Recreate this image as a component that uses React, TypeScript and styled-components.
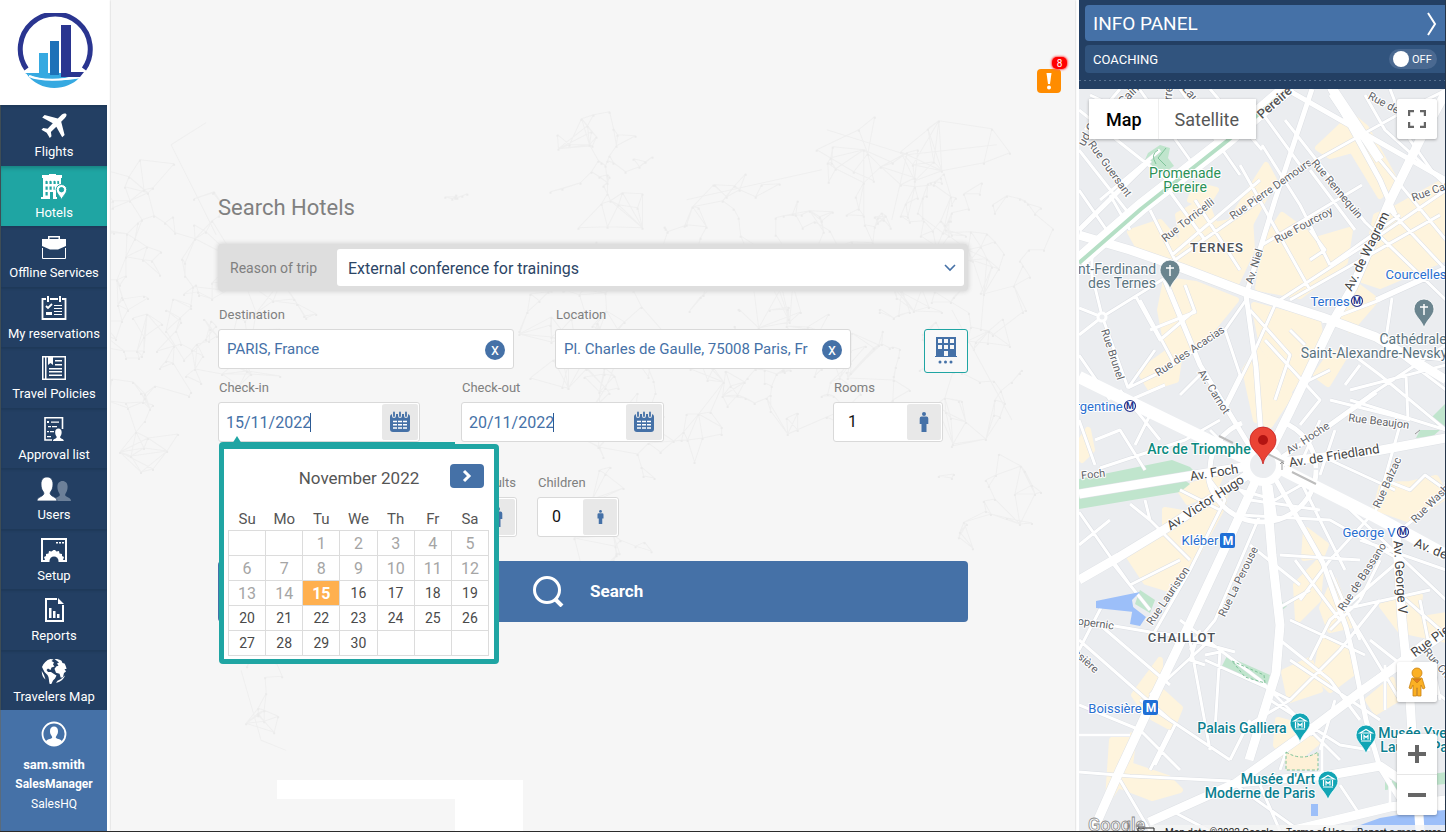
import React from "react";
import styled, { createGlobalStyle, css } from "styled-components";

const c = {
  navy: "#233f63",
  blue: "#4571a7",
  teal: "#1fa5a3",
  page: "#f6f6f6",
  label: "#808080",
  line: "#d9d9d9",
  orange: "#ff8c00",
};

const GlobalStyle = createGlobalStyle`
  *, *::before, *::after { box-sizing: border-box; }
  body { margin: 0; background: #fff; font-family: Roboto, "Liberation Sans", sans-serif; }
  button, input, select { font-family: inherit; margin: 0; }
`;

const Page = styled.div`
  display: grid;
  grid-template-columns: 107px minmax(0, 1fr) 367px;
  column-gap: 4px;
  min-height: 100vh;
  border-bottom: 1px solid #2b2b2b;
  overflow: hidden;
`;

/* ---------- sidebar ---------- */

const Sidebar = styled.aside`
  display: flex;
  flex-direction: column;
  color: #fff;
`;

const LogoBox = styled.div`
  display: flex;
  justify-content: center;
  height: 105px;
  padding: 13px 0 0 3px;
`;

const Nav = styled.nav`
  flex: 1;
  display: flex;
  flex-direction: column;
  border-left: 1px solid #3f4d55;
`;

const NavLink = styled.a<{ $active?: boolean }>`
  flex: 1;
  display: flex;
  flex-direction: column;
  align-items: center;
  padding-top: 8px;
  gap: 4px;
  min-height: 58px;
  font-size: 13px;
  line-height: 18px;
  white-space: nowrap;
  color: #fff;
  text-decoration: none;
  background: ${c.navy};
  box-shadow: inset 0 2px 2px #1f3959;
  ${(p) =>
    p.$active &&
    css`
      background: ${c.teal};
      box-shadow: inset 0 4px 4px -2px #18807f;
    `}
`;

const Profile = styled.a`
  display: flex;
  flex-direction: column;
  align-items: center;
  height: 121px;
  padding-top: 11px;
  border-left: 1px solid #5a6b7c;
  background: ${c.blue};
  color: #fff;
  text-decoration: none;
  font-size: 12px;
  line-height: 20px;
`;

const ProfileName = styled.strong`
  margin-top: 8px;
  font-size: 13px;
  line-height: 19px;
`;

/* ---------- main area ---------- */

const Main = styled.main`
  position: relative;
  display: flex;
  flex-direction: column;
  align-items: center;
  padding: 193px 24px 0;
  background: ${c.page};
  box-shadow: 0 0 2px #b8b8b8;
  clip-path: inset(0 -2px 0 -2px);
`;

const Backdrop = styled.svg`
  position: absolute;
  top: 0;
  left: 0;
  width: 100%;
  height: 100%;
`;

const AlertButton = styled.button`
  position: absolute;
  top: 69px;
  right: 14px;
  width: 24px;
  height: 24px;
  padding: 0;
  border: 0;
  border-radius: 4px;
  background: ${c.orange};
`;

const AlertCount = styled.span`
  position: absolute;
  top: -12px;
  right: -6px;
  width: 15px;
  height: 12px;
  border-radius: 5px;
  background: #f00;
  box-shadow: 0 0 2px 1px #f66;
  color: #fff;
  font-size: 10px;
  line-height: 13px;
  text-align: center;
`;

const Form = styled.form`
  position: relative;
  width: 100%;
  max-width: 750px;
`;

const Title = styled.h1`
  margin: 0 0 21px;
  font-size: 22px;
  line-height: 30px;
  font-weight: 400;
  color: ${c.label};
`;

const ReasonBar = styled.div`
  display: flex;
  align-items: center;
  height: 47px;
  padding: 5px 4px 5px 12px;
  border-radius: 4px;
  background: #dedede;
  box-shadow: 0 0 4px 1px #d6d6d6;
`;

const ReasonLabel = styled.label`
  width: 107px;
  font-size: 14px;
  color: ${c.label};
`;

const SelectBox = styled.div`
  position: relative;
  flex: 1;
  display: flex;
  & > svg {
    position: absolute;
    right: 8px;
    top: 13px;
    pointer-events: none;
  }
`;

const Select = styled.select`
  flex: 1;
  height: 37px;
  padding: 1px 11px 0;
  border: 0;
  border-radius: 3px;
  appearance: none;
  background: #fff;
  color: #2c4566;
  font-size: 16px;
`;

const Row = styled.div<{ $top: number }>`
  display: flex;
  align-items: flex-end;
  margin-top: ${(p) => p.$top}px;
`;

const Field = styled.div<{ $w: number; $ml?: string; $end?: boolean; $mr?: number }>`
  position: relative;
  display: flex;
  flex-direction: column;
  align-items: ${(p) => (p.$end ? "flex-end" : "stretch")};
  width: ${(p) => p.$w}px;
  margin-left: ${(p) => p.$ml ?? "0"};
  margin-right: ${(p) => p.$mr ?? 0}px;
`;

const Label = styled.label`
  padding: 0 1px;
  font-size: 13px;
  line-height: 18px;
  margin-bottom: 5px;
  color: ${c.label};
`;

const InputBox = styled.div`
  display: flex;
  align-items: center;
  width: 100%;
  height: 40px;
  border: 1px solid ${c.line};
  border-radius: 3px;
  background: #fff;
`;

const TextInput = styled.input`
  flex: 1;
  min-width: 0;
  height: 36px;
  margin: 0 9px 0 8px;
  padding: 0;
  border: 0;
  background: none;
  color: ${c.blue};
  font-size: 15px;
`;

const DateInput = styled.input`
  width: 84px;
  height: 36px;
  margin-left: 7px;
  padding: 0;
  border: 0;
  background: none;
  color: ${c.blue};
  font-size: 16px;
`;

const Caret = styled.span`
  width: 1px;
  height: 19px;
  background: #2c5a94;
`;

const NumberInput = styled.input`
  flex: 1;
  min-width: 0;
  height: 36px;
  padding: 0 0 2px 14px;
  border: 0;
  background: none;
  color: #111;
  font-size: 16px;
`;

const ClearButton = styled.button`
  width: 20px;
  height: 20px;
  margin: 1px 8px 0 0;
  padding: 0;
  border: 0;
  border-radius: 50%;
  background: ${c.blue};
  color: #fff;
  font-size: 16px;
  line-height: 18px;
`;

const AddOn = styled.button`
  display: flex;
  align-items: center;
  justify-content: center;
  align-self: stretch;
  width: 37px;
  margin-left: auto;
  padding: 0;
  border: 1px solid #fff;
  border-left: 0;
  border-radius: 3px;
  background: #e8e8e8;
`;

const AddOnMark = styled(AddOn).attrs({ as: "span" })`
  width: 35px;
`;

const HotelButton = styled.button`
  display: flex;
  align-items: center;
  justify-content: center;
  width: 44px;
  height: 44px;
  margin: 0 0 -4px auto;
  padding: 0;
  border: 1px solid ${c.teal};
  border-radius: 3px;
  background: #f8f8f8;
`;

const SearchButton = styled.button`
  display: flex;
  align-items: center;
  gap: 26px;
  width: 100%;
  height: 61px;
  margin-top: 24px;
  padding: 0 0 2px 314px;
  border: 0;
  border-radius: 4px;
  background: ${c.blue};
  color: #fff;
  font-size: 17px;
  line-height: 32px;
  font-weight: 700;
`;

const Banner = styled.div`
  position: relative;
  display: flex;
  flex-direction: column;
  align-items: flex-end;
  align-self: flex-start;
  width: 246px;
  margin: auto 0 0 calc((100% - min(100%, 750px)) / 2 + 59px);
`;

const BannerTop = styled.div`
  width: 100%;
  height: 19px;
  background: #fff;
`;

const BannerSide = styled.div`
  width: 68px;
  height: 32px;
  background: #fff;
`;

/* ---------- calendar ---------- */

const Popup = styled.div`
  position: absolute;
  z-index: 2;
  top: calc(100% + 2px);
  left: 1px;
  width: 280px;
  padding: 14px 4px 3px;
  border: 5px solid ${c.teal};
  border-radius: 4px;
  background: #fff;
  &::before {
    content: "";
    position: absolute;
    top: -13px;
    left: 8px;
    border: 5px solid transparent;
    border-top: 0;
    border-bottom: 8px solid ${c.teal};
  }
  &::after {
    content: "";
    position: absolute;
    top: -7px;
    left: -5px;
    width: 236px;
    height: 7px;
    border-radius: 4px 0 0 0;
    background: ${c.teal};
  }
`;

const PopupHead = styled.div`
  display: grid;
  grid-template-columns: 34px 1fr 34px;
  align-items: center;
  padding: 0 6px;
  margin-bottom: 18px;
`;

const Month = styled.h2`
  margin: 3px 0 0;
  font-size: 17px;
  line-height: 24px;
  font-weight: 400;
  text-align: center;
  color: #555;
`;

const NextButton = styled.button`
  display: flex;
  align-items: center;
  justify-content: center;
  width: 34px;
  height: 24px;
  margin-bottom: 2px;
  padding: 0;
  border: 0;
  border-radius: 4px;
  background: ${c.blue};
`;

const Days = styled.table`
  width: 261px;
  table-layout: fixed;
  border-collapse: collapse;
  color: #555;
  th {
    height: 22px;
    padding: 0;
    font-size: 15px;
    font-weight: 400;
  }
`;

const DayCell = styled.td`
  height: 25px;
  padding: 0;
  border: 1px solid #dcdcdc;
`;

const Day = styled.button<{ $past?: boolean; $on?: boolean }>`
  display: block;
  width: 100%;
  height: 24px;
  padding: 1px 0 0;
  border: 0;
  background: ${(p) => (p.$on ? "#ffb04f" : "none")};
  color: ${(p) => (p.$on ? "#fff" : p.$past ? "#a5a5a5" : "#4a4a4a")};
  font-size: ${(p) => (p.$past || p.$on ? 16 : 14)}px;
  font-weight: ${(p) => (p.$on ? 700 : 400)};
`;

/* ---------- info panel ---------- */

const Panel = styled.aside`
  display: flex;
  flex-direction: column;
  border-right: 1px solid #26364a;
`;

const PanelTop = styled.div`
  height: 89px;
  padding: 5px 0 0 6px;
  background: ${c.navy};
`;

const PanelTitle = styled.button`
  display: flex;
  align-items: center;
  justify-content: space-between;
  width: 100%;
  height: 36px;
  padding: 1px 8px 0;
  border: 0;
  border-radius: 4px 0 0 4px;
  background: ${c.blue};
  color: #fff;
  font-size: 19px;
`;

const Coaching = styled.label`
  display: flex;
  align-items: center;
  justify-content: space-between;
  height: 28px;
  margin-top: 4px;
  padding: 0 8px;
  border-radius: 4px 0 0 4px;
  background: #31547e;
  color: #fff;
  font-size: 13px;
`;

const Toggle = styled.span`
  position: relative;
  display: flex;
  align-items: center;
  width: 48px;
  height: 20px;
  padding-left: 23px;
  border-radius: 10px;
  background: #4a6991;
  font-size: 11px;
`;

const ToggleInput = styled.input`
  position: absolute;
  top: 2px;
  left: 4px;
  width: 16px;
  height: 16px;
  margin: 0;
  appearance: none;
  border-radius: 50%;
  background: #fff;
`;

const Dots = styled.div`
  height: 1px;
  margin: 7px 0 0 -6px;
  background: repeating-linear-gradient(90deg, #56708f 0 2px, transparent 2px 5px);
`;

const MapArea = styled.section`
  position: relative;
  flex: 1;
  min-height: 420px;
  overflow: hidden;
  background: #eceef1;
`;

const MapSvg = styled.svg`
  position: absolute;
  inset: 0;
  width: 100%;
  height: 100%;
  font-family: Roboto, sans-serif;
`;

const MapTypes = styled.div`
  position: absolute;
  top: 10px;
  left: 10px;
  display: flex;
  background: #fff;
  box-shadow: 0 1px 3px rgba(0, 0, 0, 0.3);
`;

const MapType = styled.button<{ $on?: boolean }>`
  height: 40px;
  padding: ${(p) => (p.$on ? "0 16px 0 17px" : "0 17px 0 16px")};
  border: 0;
  border-right: ${(p) => (p.$on ? "1px solid #eee" : "0")};
  background: none;
  color: ${(p) => (p.$on ? "#000" : "#565656")};
  font-size: 18px;
  font-weight: ${(p) => (p.$on ? 500 : 400)};
`;

const MapTool = styled.button<{ $top?: number; $bottom?: number }>`
  position: absolute;
  right: 8px;
  ${(p) => (p.$top !== undefined ? `top: ${p.$top}px;` : `bottom: ${p.$bottom}px;`)}
  display: flex;
  align-items: center;
  justify-content: center;
  width: 40px;
  height: 40px;
  padding: 0;
  border: 0;
  border-radius: 2px;
  background: #fff;
  box-shadow: 0 1px 3px rgba(0, 0, 0, 0.3);
`;

const ZoomBox = styled.div`
  position: absolute;
  right: 8px;
  bottom: 16px;
  display: flex;
  flex-direction: column;
  border-radius: 2px;
  background: #fff;
  box-shadow: 0 1px 3px rgba(0, 0, 0, 0.3);
  button {
    display: flex;
    align-items: center;
    justify-content: center;
    width: 40px;
    height: 40px;
    padding: 0;
    border: 0;
    background: none;
  }
  button + button {
    height: 41px;
    border-top: 1px solid #e6e6e6;
  }
`;

/* ---------- icons ---------- */

const Icon = ({ children }: { children: React.ReactNode }) => (
  <svg width="26" height="26" viewBox="0 0 26 26" fill="#fff" aria-hidden="true">
    {children}
  </svg>
);

const Head = ({ fill = "#fff" }: { fill?: string }) => (
  <path
    fill={fill}
    d="M0 24c0-4 5-4 6.500-6 .7-1 .3-2-.5-3.200C4.600 13 4 10.500 4 7.500 4 3.500 6.500 1 10 1s6 2.500 6 6.500c0 3-.6 5.500-2 7.300-.8 1.200-1.200 2.200-.5 3.200C15 20 20 20 20 24Z"
  />
);

const navItems: { label: string; active?: boolean; icon: React.ReactNode }[] = [
  {
    label: "Flights",
    icon: (
      <Icon>
        <path
          d="M25.200.9c-1-1-3.400-.4-4.800 1L16.800 5.400 3.600 2 1.200 4.400 11.800 10.300 6.600 15.700 2.200 15 .5 16.700l5.200 3.100 3.100 5.200 1.700-1.700-.6-4.400 5.400-5.200 5.900 10.600 2.400-2.400-3.400-13.200 3.500-3.500c1.500-1.500 2.400-3.400 1.500-4.300Z"
        />
      </Icon>
    ),
  },
  {
    label: "Hotels",
    active: true,
    icon: (
      <Icon>
        <path
          fillRule="evenodd"
          d="M2 1h6V0h7v1h6v3h-1v8h-3l-2 3v8h1v2H0v-2h2V4H1V1ZM4.500 7v3h2.200V7.500q-1.100-1.400-2.200-.5Zm4 0v3h2.200V7.500q-1.100-1.400-2.200-.5Zm4 0v3h2.200V7.500q-1.100-1.400-2.200-.5Zm3.800 0v3h1.800V7.500q-.9-1.400-1.800-.5ZM4.500 12.500v3.200h2.200v-3.200Zm4 0v3.200h2.200v-3.200Zm4 0v3.200h1.200v-3.200ZM4.500 18v3.500h2.200V18Zm4.500 0v7h3v-7Z"
        />
        <path
          fillRule="evenodd"
          stroke={c.teal}
          d="M20.500 10.500c-3 0-5.300 2.200-5.300 5.200 0 3.500 3.300 5.500 5.300 9.800 2-4.300 5.300-6.300 5.300-9.800 0-3-2.300-5.200-5.300-5.200Zm0 3a2.200 2.200 0 1 1 0 4.400 2.200 2.200 0 0 1 0-4.400Z"
        />
      </Icon>
    ),
  },
  {
    label: "Offline Services",
    icon: (
      <Icon>
        <path d="M7 5V2h12v3h-1.500V3.500h-9V5ZM1 5h24v7l-8 3.500H9L1 12Z" />
        <path fill="none" stroke="#fff" d="M1.500 14v10.500h23V14" />
      </Icon>
    ),
  },
  {
    label: "My reservations",
    icon: (
      <Icon>
        <path fill="none" stroke="#fff" strokeWidth="1.800" d="M5 4H1.500v20h23V4H21M9 4h8" />
        <path d="M6 1h2v6H6zM18 1h2v6h-2zM13 10h8v1h-8zM13 13h8v1h-8zM13 16h8v1h-8zM13 19h8v1h-8zM5 17h6v3H5z" />
        <path fill="none" stroke="#fff" strokeWidth="1.800" d="m5 11 2 2 4-4" />
      </Icon>
    ),
  },
  {
    label: "Travel Policies",
    icon: (
      <Icon>
        <path
          fillRule="evenodd"
          d="M1 1h24v24H1ZM2.500 2.500v21H4v-21Zm3 0v21h18v-21H12V10l-2.500-2L7 10V2.500Z"
        />
        <path d="M14 5h7v1.500h-7zM14 9h7v1.500h-7zM8 13h13v1.500H8zM8 16h13v1.500H8zM8 19.500h13V21H8z" />
      </Icon>
    ),
  },
  {
    label: "Approval list",
    icon: (
      <Icon>
        <path fill="none" stroke="#fff" strokeWidth="1.600" d="M11 24H4V1.800h17.500V13" />
        <path d="M6 5h2v2H6zM10 5.500h8v1.200h-8zM7 10h3v1.200H7zM11 10h5v1.200h-5zM6 15h2v1.200H6zM9 15h4v1.200H9zM6 20h4v1.200H6z" />
        <g transform="translate(12 12) scale(.54)">
          <Head />
        </g>
      </Icon>
    ),
  },
  {
    label: "Users",
    icon: (
      <svg width="36" height="26" viewBox="0 0 36 26" aria-hidden="true">
        <g transform="translate(18 4) scale(.85 .88)">
          <Head fill="#6c8099" />
        </g>
        <path
          fill="#fff"
          stroke={c.navy}
          strokeWidth=".8"
          d="M1 25c0-4 5-4 6.500-6.500.7-1 .3-2-.5-3.200C5.600 13.500 5 11 5 8c0-4.500 2.500-7 6-7s6 2.500 6 7c0 3-.6 5.500-2 7.300-.8 1.200-1.200 2.200-.5 3.200C16 21 21 21 21 25Z"
        />
      </svg>
    ),
  },
  {
    label: "Setup",
    icon: (
      <Icon>
        <path
          fillRule="evenodd"
          d="M0 1h26v24H0ZM2 3v20h2l-1-3 2-1 0-2 2.500-.5.5-2.500 2.500.5L12.500 13h1.500l1.500 1.500 2.500-.5.5 2.500 2.500.5v2l2 1-1 3h2V3Z"
        />
        <path fill={c.navy} d="M8.500 24a4.500 4.500 0 0 1 9 0v1h-9Z" />
        <path d="M15 5h2v1.500h-2zM18 5h2v1.500h-2zM21 5h2v1.500h-2z" />
      </Icon>
    ),
  },
  {
    label: "Reports",
    icon: (
      <Icon>
        <path fill="none" stroke="#fff" strokeWidth="2" d="M16 2H5v22h17V8" />
        <path d="M17 1v6h6ZM8 11h2.500v10H8zM12 14h2.500v7H12zM16 17h2.500v4H16z" />
      </Icon>
    ),
  },
  {
    label: "Travelers Map",
    icon: (
      <Icon>
        <path d="M1 9C2.500 5 5.500 2 9.500 1l3 .6-2 1.400 2.500 1.500-1 2 1.500 2-3 1-1 2.500-2.500-1.500-1.500 1.500 1.500 2 3 0 3 2 2.500 1.500-1.500 3-2 2-1.500 3.200-1.500 1C7.500 23.500 8.500 19.500 6.500 17L3.500 14ZM13.500 1c2.500-.2 5 .4 7 1.800l1 2.200 2 .5c1 1.700 1.800 3.700 2 5.500l-2 0 1.500 2.500-2 1.500-1 4-2.200.8-1.300-4-3.500-1-1.500-4 2-2.500 2-.5-1.500-2.200 2-1.100ZM20 21l4-3.500c-1.500 4-5 6.800-9 7.300l1.500-2ZM.8 13l2.200 4 1.500 4.500C2 19.500.6 16.500.8 13Z" />
      </Icon>
    ),
  },
];

const Logo = () => (
  <svg width="76" height="76" viewBox="0 0 76 76" aria-hidden="true">
    <path fill="none" stroke="#2a3590" strokeWidth="5" d="M9.500 56A35 35 0 1 1 67 56" />
    <path fill="#36a9e1" d="M8 60h14V40h9v20h21v4c-14 4-31 3-44-4Z" />
    <path fill="#36a9e1" d="M9 60c12 8 31 9 53 5-12 13-40 15-53-5Z" />
    <path fill="none" stroke="#fff" strokeWidth="2" d="M12 63c14 6 34 4 52 1" />
    <path fill="#1d71b8" d="M33 28h9v34h-9z" />
    <path fill="#2a3590" d="M44 12h10v47h13l-4 5H44z" />
  </svg>
);

const Calendar = () => (
  <svg width="22" height="22" viewBox="0 0 22 22" aria-hidden="true">
    <rect x="1" y="3" width="20" height="18" rx="3" fill={c.blue} />
    <path stroke="#e8e8e8" strokeWidth="4" strokeLinecap="round" d="M5 2v3M11 2v3M17 2v3" />
    <path stroke={c.blue} strokeWidth="1.800" strokeLinecap="round" d="M5 1.500V5M11 1.500V5M17 1.500V5" />
    <path stroke="#fff" strokeWidth="1.500" strokeDasharray="4 1" d="M4 10.500h14M4 13.700h14M4 17h14" />
  </svg>
);

const Person = ({ size }: { size: number }) => (
  <svg width={size / 2} height={size} viewBox="0 0 10 20" fill={c.blue} aria-hidden="true">
    <circle cx="5" cy="2" r="2" />
    <path d="M2.500 4.500h5Q9.300 4.500 9.300 6.500V12H7.500v8h-5v-8H.7V6.500q0-2 1.800-2Z" />
  </svg>
);

/* ---------- world network behind the form ---------- */

const regions = [
  [40, 260, 90, 110, 70],
  [30, 400, 50, 90, 40],
  [120, 330, 90, 60, 50],
  [490, 180, 60, 70, 45],
  [480, 330, 80, 90, 70],
  [540, 420, 80, 90, 55],
  [640, 250, 100, 80, 75],
  [760, 220, 110, 80, 70],
  [860, 250, 90, 90, 60],
  [680, 370, 80, 70, 60],
  [820, 370, 90, 90, 80],
  [870, 500, 60, 50, 25],
  [500, 530, 50, 80, 25],
  [150, 690, 22, 60, 18],
  [345, 196, 12, 6, 8],
  [790, 150, 130, 40, 16],
];

const buildNetwork = () => {
  let seed = 7;
  const rnd = () => {
    seed = (seed * 16807) % 2147483647;
    return seed / 2147483647;
  };
  let lines = "";
  let dots = "";
  regions.forEach(([cx, cy, rx, ry, n]) => {
    const pts: number[][] = [];
    for (let i = 0; i < n; i++) {
      const a = rnd() * Math.PI * 2;
      const r = Math.pow(rnd(), 0.7);
      pts.push([Math.round(cx + Math.cos(a) * r * rx), Math.round(cy + Math.sin(a) * r * ry)]);
    }
    pts.forEach((p, i) => {
      pts
        .map((q, j) => ({ q, j, d: Math.hypot(p[0] - q[0], p[1] - q[1]) }))
        .filter((o) => o.j !== i)
        .sort((m, k) => m.d - k.d)
        .slice(0, i % 9 === 0 ? 6 : 2)
        .forEach((o) => {
          lines += `M${p[0]} ${p[1]}L${o.q[0]} ${o.q[1]}`;
        });
      dots += `M${p[0] - 1} ${p[1]}h2v2h-2z`;
    });
  });
  return { lines, dots };
};

const network = buildNetwork();

/* ---------- city map ---------- */

const parks = [
  "M1148 153l12-8 10 3-2 10 6 8-12 8-10-6-8-6Z",
  "M1079 479 1172 460 1190 467 1196 473 1079 490Z",
  "M1079 497 1180 477 1190 484 1180 492 1079 509Z",
  "M1227 656 1270 675 1268 685 1221 668Z",
  "M1140 590 1155 600 1150 613 1135 604Z",
  "M1446 403 1432 417 1446 427Z",
  "M1420 430 1440 430 1432 437 1416 438Z",
  "M1280 600l7 6-7 6Z",
  "M1385 780 1446 772 1446 784 1385 790Z",
];

const shops = [
  "M1130 232 1160 222 1180 245 1180 262 1140 250Z",
  "M1178 215 1205 200 1215 225 1250 218 1252 250 1236 284 1186 264Z",
  "M1196 185 1216 190 1206 206 1190 200Z",
  "M1228 225 1266 165 1274 180 1246 232Z",
  "M1266 240 1282 215 1316 240 1350 230 1345 262 1300 296 1258 288Z",
  "M1318 148 1352 116 1366 128 1395 180 1380 196 1352 150 1330 156Z",
  "M1376 216 1396 208 1446 180 1446 258 1380 286 1362 280Z",
  "M1356 285 1376 300 1350 330 1336 315Z",
  "M1166 280 1196 284 1236 300 1205 338 1180 352 1176 380 1150 388 1140 372 1168 352 1160 310Z",
  "M1254 305 1318 322 1322 345 1290 390 1262 345Z",
  "M1245 370 1256 420 1270 425 1290 395 1258 350Z",
  "M1316 375 1332 352 1345 356 1328 384Z",
  "M1128 555 1165 532 1165 510 1195 515 1226 492 1222 508 1196 556 1172 590 1146 582Z",
  "M1080 442 1088 430 1092 450 1082 460Z",
  "M1180 490 1222 474 1214 490 1188 502Z",
  "M1296 585 1322 558 1318 600 1298 620Z",
  "M1306 530 1326 545 1322 555 1304 558Z",
  "M1334 580 1352 625 1330 630 1322 608Z",
  "M1382 485 1410 484 1436 478 1446 496 1410 520 1376 508Z",
  "M1382 606 1420 596 1416 620 1446 615 1446 640 1400 630Z",
  "M1134 695 1160 660 1160 690 1180 708 1172 728 1148 715Z",
  "M1112 740 1134 735 1130 765 1168 778 1180 790 1152 798 1118 785 1108 800Z",
  "M1284 672 1310 660 1320 690 1290 700Z",
  "M1322 640 1350 650 1354 672 1330 690 1316 676Z",
  "M1278 720 1300 726 1318 742 1290 765 1276 745Z",
  "M1368 700 1392 680 1396 700 1376 712Z",
];

const minor =
  "M1079 110 1180 190M1079 150 1130 215M1090 95 1165 130M1100 200 1160 150M1120 89 1085 130M1140 90 1190 160" +
  "M1180 89 1240 175M1210 89 1262 150M1079 190 1110 235M1110 195 1130 230M1150 210 1175 260M1165 185 1205 240" +
  "M1175 260 1320 158 1410 108 1446 90M1172 255 1260 180M1195 200 1240 270M1240 165 1310 290M1262 245 1362 185" +
  "M1262 145 1300 205 1330 265M1285 120 1365 222 1446 300M1260 110 1300 165M1310 170 1355 230M1330 95 1360 140" +
  "M1390 89 1410 140 1435 175M1365 95 1385 130 1446 185M1355 130 1446 240M1385 205 1446 270M1330 265 1400 215" +
  "M1280 300 1380 235 1446 190M1322 322 1380 300 1446 270M1290 300 1440 215M1310 230 1325 250 1310 260" +
  "M1092 275 1102 316 1128 388M1079 308 1102 317 1165 278M1102 317 1079 335M1092 240 1092 280M1135 295 1160 340 1195 310" +
  "M1128 388 1165 370 1225 330 1246 300M1140 300 1175 365M1150 330 1195 312 1185 285M1128 388 1155 350M1165 385 1130 400" +
  "M1079 355 1110 400M1180 395 1200 375M1225 330 1240 375 1225 405M1250 310 1290 355 1275 400M1275 305 1255 350 1225 410" +
  "M1265 340 1320 400 1300 425M1290 330 1305 345M1300 385 1330 370M1340 345 1380 375 1446 430M1380 340 1446 390" +
  "M1392 298 1385 345M1350 350 1446 360M1350 390 1446 365M1360 365 1345 385M1406 375 1408 420M1330 400 1410 420" +
  "M1446 345 1370 395M1350 400 1446 430M1079 420 1095 465M1095 440 1120 430 1145 470M1120 390 1160 440M1150 415 1135 445" +
  "M1100 468 1185 440 1220 420M1210 430 1230 450M1180 490 1220 510M1300 465 1320 420M1335 430 1320 475M1330 460 1395 490" +
  "M1400 425 1376 510M1385 480 1410 490 1425 475 1446 490M1376 510 1330 560 1300 600M1446 495 1400 530M1340 500 1446 600" +
  "M1079 512 1130 585 1180 560M1110 560 1150 610M1079 545 1110 520M1130 504 1150 520 1145 500M1150 520 1190 560" +
  "M1210 480 1225 500 1190 570 1150 640M1230 480 1250 500 1320 510M1240 515 1330 520 1400 560M1260 515 1215 620 1190 650" +
  "M1250 545 1300 585M1280 555 1360 560M1275 610 1310 590M1240 490 1275 500 1310 480M1295 560 1340 620M1300 480 1345 570" +
  "M1400 560 1330 620 1310 660M1360 540 1446 570M1340 610 1430 590M1395 590 1446 635M1330 570 1360 640M1380 560 1360 600" +
  "M1079 620 1150 632 1210 640M1079 640 1170 720M1079 650 1105 600M1100 625 1170 685M1079 705 1140 730 1180 770M1079 735 1130 735" +
  "M1140 700 1230 760M1180 620 1260 680 1340 760M1187 625 1210 750M1210 640 1150 695M1200 630 1190 660 1205 665" +
  "M1205 655 1220 652M1268 689 1290 700M1220 650 1215 730M1190 640 1235 652M1205 660 1272 690M1170 730 1150 770M1079 772 1130 776 1230 781M1120 780 1150 831" +
  "M1175 725 1155 765M1240 730 1290 700 1340 650 1380 600M1250 720 1230 760M1280 640 1330 680 1360 720M1290 660 1380 720" +
  "M1270 700 1340 745M1290 620 1365 655M1330 630 1360 600M1340 600 1400 700M1340 745 1370 750M1335 700 1320 750" +
  "M1310 735 1360 690 1425 640M1230 781 1300 831M1260 785 1280 831M1170 810 1210 831M1290 740 1280 770M1322 742V775" +
  "M1370 640 1446 700M1385 665V710M1420 600 1440 700M1390 780V810M1410 775V805M1340 785 1360 815";

const medium =
  "M1246 295 1275 200 1312 89M1246 295 1256 367 1262 450M1165 280 1200 365 1255 455M1278 460 1330 425 1376 392" +
  "M1276 480 1323 563 1346 627 1353 655 1366 720 1380 768 1400 800M1270 485 1275 520M1330 89 1380 180 1395 215M1150 160 1079 230" +
  "M1279 85 1446 180M1376 300 1446 268M1210 468a52 50 0 0 1 32-45M1282 422a52 50 0 0 1 34 46M1316 470a52 50 0 0 1-108 0";

const major =
  "M1079 235 1130 250 1182 268 1245 292 1322 317 1376 337 1446 380M1446 92 1420 140 1389 203 1353 287 1332 323 1289 413 1268 455" +
  "M1079 377 1136 405 1249 460M1283 470 1376 517 1446 555M1280 462 1376 451 1446 438M1079 494 1249 466" +
  "M1249 474 1170 526 1119 557 1079 580M1256 480 1225 548 1190 623 1156 693 1120 770 1093 831" +
  "M1266 483 1272 555 1280 625 1276 673 1249 760M1446 632 1363 690 1306 733 1236 783 1149 822" +
  "M1396 530 1402 620 1410 700 1418 831M1236 783 1330 775 1380 766 1446 810M1330 85 1380 160M1290 831 1390 807 1446 800";

type MapText = [string, number, number, number?, number?, string?, number?];
const streets: MapText[] = [
  ["Pereire", 1274, 102, -42, 13, "#555", 500],
  ["Sain", 1128, 94, -45, 12],
  ["erre", 1167, 96, -85, 12],
  ["Laug", 1194, 96, 50, 12],
  ["Rue de Prony", 1398, 109, 28, 11],
  ["ud C", 1086, 134, -60, 12],
  ["Rue Guersant", 1111, 168, 54, 11],
  ["Rue Pierre Demours", 1270, 188, -35, 11],
  ["Rue Torricelli", 1187, 219, -38, 11],
  ["Rue Rennequin", 1338, 188, 50, 11],
  ["Rue Fourcroy", 1303, 224, -28, 11],
  ["Rue Cardinet", 1441, 186, -20, 11],
  ["Av. Niel", 1253, 266, -73, 11],
  ["Av. de Wagram", 1366, 251, -64, 13, "#444"],
  ["Rue des Acacias", 1189, 350, -34, 11],
  ["Rue Brunel", 1114, 354, 72, 11],
  ["Av. Carnot", 1215, 391, 58, 11],
  ["Rue Beaujon", 1379, 420, 7, 11],
  ["Av. Hoche", 1307, 437, -33, 11],
  ["Av. de Friedland", 1334, 455, -9, 13, "#444"],
  ["Av. Foch", 1214, 472, -9, 13, "#444"],
  ["Foch", 1093, 473, -6, 11],
  ["Av. Victor Hugo", 1205, 502, -33, 13, "#444"],
  ["Rue Balzac", 1386, 482, -66, 11],
  ["Rue Washington", 1440, 492, -45, 11],
  ["Av. des Champs", 1458, 559, 22, 13, "#444"],
  ["Av. George V", 1401, 577, 86, 13, "#444"],
  ["Rue de Bassano", 1361, 576, -57, 11],
  ["Rue La Perouse", 1237, 581, -64, 11],
  ["Rue Lauriston", 1167, 595, -56, 11],
  ["opernic", 1096, 622, 8, 11],
  ["ssière", 1087, 660, 42, 11],
  ["Rue Pierre", 1436, 636, -36, 13, "#444"],
  ["Rue Ch", 1438, 662, 50, 11],
];

const park = "#2b9156";
const church = "#5b747f";
const metro = "#2a6fd0";
const sight = "#0b8090";

const places: MapText[] = [
  ["Promenade", 1185, 173, 0, 14, park],
  ["Pereire", 1185, 187, 0, 14, park],
  ["nt-Ferdinand", 1117, 269, 0, 14, church],
  ["des Ternes", 1122, 283, 0, 14, church],
  ["Courcelles", 1416, 274, 0, 13, metro],
  ["Ternes", 1330, 301, 0, 13, metro],
  ["Cathédrale", 1413, 339, 0, 14, church],
  ["Saint-Alexandre-Nevsky", 1374, 353, 0, 14, church],
  ["rgentine", 1099, 406, 0, 13, metro],
  ["Arc de Triomphe", 1199, 449, 0, 14, "#0b8a80", 500],
  ["Kléber", 1200, 540, 0, 13, metro],
  ["George V", 1369, 532, 0, 13, metro],
  ["Boissière", 1115, 708, 0, 13, metro],
  ["Palais Galliera", 1242, 728, 0, 14, sight, 500],
  ["Musée Yves", 1416, 733, 0, 14, sight, 500],
  ["Laurent Paris", 1422, 747, 0, 14, sight, 500],
  ["Musée d'Art", 1278, 779, 0, 14, sight, 500],
  ["Moderne de Paris", 1260, 793, 0, 14, sight, 500],
];

const Labels = ({ items }: { items: MapText[] }) => (
  <g textAnchor="middle" paintOrder="stroke" stroke="#fff" strokeWidth="2" strokeLinejoin="round">
    {items.map(([t, x, y, r = 0, s = 12, f = "#5f6368", w = 400]) => (
      <text key={t + x} transform={`translate(${x} ${y}) rotate(${r})`} dy="5" fontSize={s} fill={f} fontWeight={w}>
        {t}
      </text>
    ))}
  </g>
);

const Pin = ({ x, y, museum }: { x: number; y: number; museum?: boolean }) => (
  <g transform={`translate(${x} ${y})`}>
    <path
      fill={museum ? "#12a5b5" : "#6b858f"}
      stroke="#fff"
      strokeWidth=".8"
      d="M0 18C-2 10-10 6-10-1a10 10 0 0 1 20 0C10 6 2 10 0 18Z"
    />
    {museum ? (
      <path fill="none" stroke="#fff" strokeWidth="1.200" d="M-6-3 0-6.500 6-3ZM-5 5H5M-4.500-2v6M4.500-2v6M-2 3.500v-4l2 2 2-2v4" />
    ) : (
      <path fill="none" stroke="#fff" strokeWidth="1.500" d="M0-6V5M-4-3H4" />
    )}
  </g>
);

const Metro = ({ x, y, rer }: { x: number; y: number; rer?: boolean }) => (
  <g transform={`translate(${x} ${y})`} textAnchor="middle" fontWeight="700">
    {rer ? (
      <rect x="-7" y="-7" width="15" height="15" rx="2" fill="#1f6fd6" />
    ) : (
      <circle r="5.500" fill="#fff" stroke="#23308a" strokeWidth="1.200" />
    )}
    <text dx={rer ? 1 : 0} dy={rer ? 5 : 3} fontSize={rer ? 12 : 9} fill={rer ? "#fff" : "#23308a"}>
      M
    </text>
  </g>
);

const CityMap = () => (
  <MapSvg viewBox="1079 89 366 742" preserveAspectRatio="xMidYMid slice" role="img" aria-label="Map of Paris">
    <rect x="1079" y="89" width="367" height="742" fill="#ebedf0" />
    {shops.map((d) => (
      <path key={d} d={d} fill="#fef4dd" stroke="#fef4dd" strokeWidth="6" strokeLinejoin="round" />
    ))}
    {parks.map((d) => (
      <path key={d} d={d} fill="#c0e5cd" />
    ))}
    <g fill="none" strokeLinejoin="round">
      <path d={minor} stroke="#dcdfe4" strokeWidth="4" />
      <path d={medium} stroke="#dcdfe4" strokeWidth="6" />
      <path d={major} stroke="#dfe2e6" strokeWidth="10" />
      <path d="M1079 261 1141 207 1227 140 1290 86" stroke="#dfe2e6" strokeWidth="16" />
      <path d={minor} stroke="#fff" strokeWidth="3" />
      <path d={medium} stroke="#fff" strokeWidth="5" />
      <path d={major} stroke="#fff" strokeWidth="9" />
      <path d="M1079 261 1141 207 1227 140 1290 86" stroke="#fff" strokeWidth="15" />
      <path d="M1079 263 1141 209 1227 141 1287 90" stroke="#b5dfc5" strokeWidth="4" />
      <path d="M1079 377 1136 405 1249 460M1283 470 1376 517 1446 555" stroke="#fff" strokeWidth="12" />
      <path d="M1158 150q-8 4-2 14M1166 148l-8 10 8 8" stroke="#7fc49a" />
      <path d="M1232 661l32 14 1 8-20-6Z" stroke="#7fc49a" strokeDasharray="3 2" />
      <path d="M1286 752q16 10 32 0v18h-32Z" stroke="#7fc49a" fill="#fef0d6" strokeDasharray="3 2" />
      <circle cx="1102" cy="317" r="4" fill="#ebedf0" stroke="#fff" strokeWidth="3" />
      <circle cx="1263" cy="465" r="17" fill="#ebedf0" stroke="#fff" strokeWidth="8" />
      <path d="M1219 436l14 7M1268 454l16 8M1292 472l24 12" stroke="#bdbdbd" strokeWidth="2" />
      <path d="M1282 470v-8m-2 2 2-2 2 2M1415 434l5-4" stroke="#999" />
    </g>
    <g fill="#9cbff9">
      <path d="M1096 601 1140 592 1132 600 1134 612 1096 608Z" />
      <path d="M1133 607 1146 617 1140 626 1130 624Z" />
      <path d="M1311 804h7v12h-7z" />
      <path d="M1352 828 1380 818 1410 813 1446 810V831H1352Z" />
    </g>
    <path d="M1418 800 1420 831" stroke="#fff" strokeWidth="9" />
    <Labels items={streets} />
    <Labels items={places} />
    <g fill="#4c5156" fontSize="13" fontWeight="500" letterSpacing="1" textAnchor="middle" paintOrder="stroke" stroke="#fff" strokeWidth="2">
      <text x="1217" y="252">TERNES</text>
      <text x="1182" y="642">CHAILLOT</text>
    </g>
    <Pin x={1170} y={271} />
    <Pin x={1424} y={310} />
    <Pin x={1300} y={724} museum />
    <Pin x={1366} y={736} museum />
    <Pin x={1328} y={782} museum />
    <Metro x={1357} y={301} />
    <Metro x={1130} y={406} />
    <Metro x={1403} y={532} />
    <Metro x={1227} y={540} rer />
    <Metro x={1150} y={707} rer />
    <path
      d="M1263 464c-2-11-13-13-13-24a13 13 0 0 1 26 0c0 11-11 13-13 24Z"
      fill="#ea4335"
      stroke="#c5221f"
      strokeWidth=".8"
    />
    <circle cx="1263" cy="440" r="5" fill="#b31412" />
    <rect x="1150" y="825" width="296" height="6" fill="#f5f5f5" opacity=".8" />
    <text x="1088" y="831" fontSize="18" fontWeight="500" fill="#fff" stroke="#888" strokeWidth=".8">
      Google
    </text>
    <g fontSize="10" fill="#222">
      <path d="M1138 828h16v6h-16z" fill="none" stroke="#222" />
      <text x="1165" y="836">Map data ©2022 Google</text>
      <text x="1286" y="836">Terms of Use</text>
      <text x="1357" y="836">Report a map error</text>
    </g>
  </MapSvg>
);

/* ---------- page ---------- */

const weeks = [
  [0, 0, 1, 2, 3, 4, 5],
  [6, 7, 8, 9, 10, 11, 12],
  [13, 14, 15, 16, 17, 18, 19],
  [20, 21, 22, 23, 24, 25, 26],
  [27, 28, 29, 30, 0, 0, 0],
];

const DatePopup = () => (
  <Popup>
    <PopupHead>
      <span />
      <Month>November 2022</Month>
      <NextButton type="button" aria-label="Next month">
        <svg width="10" height="14" viewBox="0 0 10 14" fill="none" stroke="#fff" strokeWidth="3">
          <path d="m2 2 5 5-5 5" />
        </svg>
      </NextButton>
    </PopupHead>
    <Days>
      <thead>
        <tr>
          {["Su", "Mo", "Tu", "We", "Th", "Fr", "Sa"].map((d) => (
            <th key={d} scope="col">{d}</th>
          ))}
        </tr>
      </thead>
      <tbody>
        {weeks.map((w, i) => (
          <tr key={i}>
            {w.map((d, j) => (
              <DayCell key={j}>
                {d > 0 && (
                  <Day type="button" $past={d < 15} $on={d === 15}>
                    {d}
                  </Day>
                )}
              </DayCell>
            ))}
          </tr>
        ))}
      </tbody>
    </Days>
  </Popup>
);

export default function App() {
  return (
    <>
      <GlobalStyle />
      <Page>
        <Sidebar>
          <LogoBox>
            <Logo />
          </LogoBox>
          <Nav>
            {navItems.map((n) => (
              <NavLink key={n.label} href="#" $active={n.active}>
                {n.icon}
                {n.label}
              </NavLink>
            ))}
          </Nav>
          <Profile href="#">
            <svg width="26" height="26" viewBox="0 0 26 26" aria-hidden="true">
              <circle cx="13" cy="13" r="11.500" fill="none" stroke="#fff" strokeWidth="1.800" />
              <path
                fill="#fff"
                d="M5 21c0-3 5-3 6-4 .6-1-.2-1.700-.8-2.800C9.400 13 9 12 9 10c0-3 1.600-4.500 4-4.500S17 7 17 10c0 2-.4 3-1.200 4.200-.6 1.100-1.400 1.800-.8 2.800 1 1 6 1 6 4-4 4.500-12 4.500-16 0Z"
              />
            </svg>
            <ProfileName>
              sam.smith
            </ProfileName>
            <strong>SalesManager</strong>
            <span>SalesHQ</span>
          </Profile>
        </Sidebar>

        <Main>
          <Backdrop viewBox="0 0 963 831" preserveAspectRatio="xMidYMid slice" aria-hidden="true">
            <path d={network.lines} fill="none" stroke="#efefef" />
            <path d={network.dots} fill="#ebebeb" />
            <path
              fill="none"
              stroke="#efefef"
              d="M60 145 95 123M60 145 105 235M715 130 795 155 780 220M795 155 885 145M575 200 710 170M840 310 900 420M130 670 150 740 175 750"
            />
          </Backdrop>

          <AlertButton type="button" aria-label="Alerts">
            <svg width="24" height="24" viewBox="0 0 24 24" fill="#fff" aria-hidden="true">
              <path d="M9.500 4h5l-1.500 11h-2z" />
              <circle cx="12" cy="18.500" r="2" />
            </svg>
            <AlertCount>8</AlertCount>
          </AlertButton>

          <Form>
            <Title>Search Hotels</Title>
            <ReasonBar>
              <ReasonLabel htmlFor="reason">Reason of trip</ReasonLabel>
              <SelectBox>
                <Select id="reason">
                  <option>External conference for trainings</option>
                </Select>
                <svg width="12" height="12" viewBox="0 0 12 12" fill="none" stroke={c.blue} strokeWidth="1.600">
                  <path d="m1 3 5 5 5-5" />
                </svg>
              </SelectBox>
            </ReasonBar>

            <Row $top={15}>
              <Field $w={296}>
                <Label htmlFor="destination">Destination</Label>
                <InputBox>
                  <TextInput id="destination" defaultValue="PARIS, France" />
                  <ClearButton type="button" aria-label="Clear destination">x</ClearButton>
                </InputBox>
              </Field>
              <Field $w={296} $ml="41px">
                <Label htmlFor="location">Location</Label>
                <InputBox>
                  <TextInput id="location" defaultValue="Pl. Charles de Gaulle, 75008 Paris, Fr" />
                  <ClearButton type="button" aria-label="Clear location">x</ClearButton>
                </InputBox>
              </Field>
              <HotelButton type="button" aria-label="More hotels">
                <svg width="22" height="28" viewBox="0 0 22 28" fill={c.blue} aria-hidden="true">
                  <path
                    fillRule="evenodd"
                    d="M1 0h20v19h1v1H0v-1h1ZM3 2v4h4V2Zm6 0v4h4V2Zm6 0v4h4V2ZM3 8v4h4V8Zm6 0v4h4V8Zm6 0v4h4V8ZM9 14v5h4v-5Z"
                  />
                  <circle cx="5" cy="25" r="1.500" />
                  <circle cx="10.500" cy="25" r="1.500" />
                  <circle cx="16" cy="25" r="1.500" />
                </svg>
              </HotelButton>
            </Row>

            <Row $top={10}>
              <Field $w={202}>
                <Label htmlFor="checkin">Check-in</Label>
                <InputBox>
                  <DateInput id="checkin" defaultValue="15/11/2022" />
                  <Caret />
                  <AddOn type="button" aria-label="Open check-in calendar">
                    <Calendar />
                  </AddOn>
                </InputBox>
                <DatePopup />
              </Field>
              <Field $w={203} $ml="41px">
                <Label htmlFor="checkout">Check-out</Label>
                <InputBox>
                  <DateInput id="checkout" defaultValue="20/11/2022" />
                  <Caret />
                  <AddOn type="button" aria-label="Open check-out calendar">
                    <Calendar />
                  </AddOn>
                </InputBox>
              </Field>
              <Field $w={110} $ml="auto" $mr={25}>
                <Label htmlFor="rooms">Rooms</Label>
                <InputBox>
                  <NumberInput id="rooms" defaultValue="1" />
                  <AddOnMark>
                    <Person size={20} />
                  </AddOnMark>
                </InputBox>
              </Field>
            </Row>

            <Row $top={32}>
              <Field $w={82} $ml="217px" $end>
                <Label htmlFor="adults">Adults</Label>
                <InputBox>
                  <NumberInput id="adults" defaultValue="1" />
                  <AddOnMark>
                    <Person size={20} />
                  </AddOnMark>
                </InputBox>
              </Field>
              <Field $w={82} $ml="20px">
                <Label htmlFor="children">Children</Label>
                <InputBox>
                  <NumberInput id="children" defaultValue="0" />
                  <AddOnMark>
                    <Person size={14} />
                  </AddOnMark>
                </InputBox>
              </Field>
            </Row>

            <SearchButton type="submit">
              <svg width="32" height="32" viewBox="0 0 32 32" fill="none" stroke="#fff" strokeWidth="3" aria-hidden="true">
                <circle cx="15" cy="15" r="12.500" />
                <path strokeWidth="4" d="m23 24 7 7" />
              </svg>
              Search
            </SearchButton>
          </Form>

          <Banner>
            <BannerTop />
            <BannerSide />
          </Banner>
        </Main>

        <Panel>
          <PanelTop>
            <PanelTitle type="button">
              INFO PANEL
              <svg width="10" height="24" viewBox="0 0 10 24" fill="none" stroke="#fff" strokeWidth="2" aria-hidden="true">
                <path d="m1 1 7 11-7 11" />
              </svg>
            </PanelTitle>
            <Coaching>
              COACHING
              <Toggle>
                <ToggleInput type="checkbox" />
                OFF
              </Toggle>
            </Coaching>
            <Dots />
          </PanelTop>
          <MapArea>
            <CityMap />
            <MapTypes>
              <MapType type="button" $on>Map</MapType>
              <MapType type="button">Satellite</MapType>
            </MapTypes>
            <MapTool type="button" $top={10} aria-label="Full screen">
              <svg width="18" height="18" viewBox="0 0 18 18" fill="none" stroke="#666" strokeWidth="2.400">
                <path d="M1 6V1h5M12 1h5v5M17 12v5h-5M6 17H1v-5" />
              </svg>
            </MapTool>
            <MapTool type="button" $bottom={129} aria-label="Street view">
              <svg width="18" height="30" viewBox="0 0 18 30" fill="#fbb024" stroke="#c98112" strokeWidth=".8">
                <path d="M4 11h10l3 10-2 1-2-4v11H9.500V21h-1v8H5V18l-2 4-2-1Z" />
                <path fill="#e37b22" d="m5 12 4 4 4-4Z" />
                <circle cx="9" cy="6" r="5" />
              </svg>
            </MapTool>
            <ZoomBox>
              <button type="button" aria-label="Zoom in">
                <svg width="18" height="18" viewBox="0 0 18 18" stroke="#666" strokeWidth="4">
                  <path d="M9 0v18M0 9h18" />
                </svg>
              </button>
              <button type="button" aria-label="Zoom out">
                <svg width="18" height="4" viewBox="0 0 18 4" fill="#666">
                  <path d="M0 0h18v4H0z" />
                </svg>
              </button>
            </ZoomBox>
          </MapArea>
        </Panel>
      </Page>
    </>
  );
}
